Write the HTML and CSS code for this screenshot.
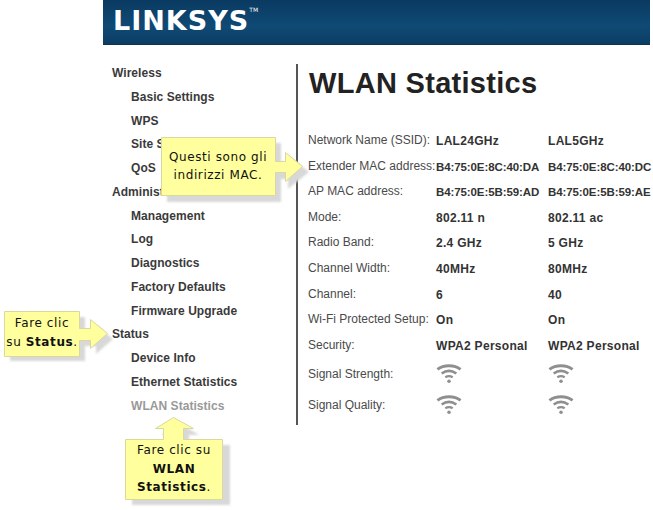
FILE: index.html
```html
<!DOCTYPE html>
<html lang="en">
<head>
    <meta charset="UTF-8">
    <title>WLAN Statistics</title>
    <link rel="stylesheet" href="styles.css">
</head>
<body>
    <svg class="defs" width="0" height="0">
        <symbol id="wifi" viewBox="0 0 24 20">
            <path d="M1 6 C7 1.4 17 1.4 23 6" fill="none" stroke="#8f8f8f" stroke-width="2.8"/>
            <path d="M5 10 C9.5 6.8 14.5 6.8 19 10" fill="none" stroke="#8f8f8f" stroke-width="2.5"/>
            <path d="M8.5 13.6 C10.8 12.2 13.2 12.2 15.5 13.6" fill="none" stroke="#8f8f8f" stroke-width="2.2"/>
            <circle cx="12" cy="17.4" r="1.7" fill="#8f8f8f"/>
        </symbol>
    </svg>
    <div class="page">
        <header class="topbar">
            <span class="logo">LINKSYS<sup>TM</sup></span>
        </header>
        <div class="main">
            <nav class="sidebar">
                <a class="group">Wireless</a>
                <a>Basic Settings</a>
                <a>WPS</a>
                <a>Site Survey</a>
                <a>QoS</a>
                <a class="group">Administration</a>
                <a>Management</a>
                <a>Log</a>
                <a>Diagnostics</a>
                <a>Factory Defaults</a>
                <a>Firmware Upgrade</a>
                <a class="group">Status</a>
                <a>Device Info</a>
                <a>Ethernet Statistics</a>
                <a class="current">WLAN Statistics</a>
            </nav>
            <section class="content">
                <h1>WLAN Statistics</h1>
                <div class="stats">
                    <span>Network Name (SSID):</span><b>LAL24GHz</b><b>LAL5GHz</b>
                    <span>Extender MAC address:</span><b class="mac">B4:75:0E:8C:40:DA</b><b class="mac">B4:75:0E:8C:40:DC</b>
                    <span>AP MAC address:</span><b class="mac">B4:75:0E:5B:59:AD</b><b class="mac">B4:75:0E:5B:59:AE</b>
                    <span>Mode:</span><b>802.11 n</b><b>802.11 ac</b>
                    <span>Radio Band:</span><b>2.4 GHz</b><b>5 GHz</b>
                    <span>Channel Width:</span><b>40MHz</b><b>80MHz</b>
                    <span>Channel:</span><b>6</b><b>40</b>
                    <span>Wi-Fi Protected Setup:</span><b>On</b><b>On</b>
                    <span>Security:</span><b>WPA2 Personal</b><b>WPA2 Personal</b>
                </div>
                <div class="signals">
                    <span>Signal Strength:</span>
                    <svg class="wifi"><use href="#wifi"/></svg>
                    <svg class="wifi"><use href="#wifi"/></svg>
                    <span>Signal Quality:</span>
                    <svg class="wifi"><use href="#wifi"/></svg>
                    <svg class="wifi"><use href="#wifi"/></svg>
                </div>
            </section>
        </div>
    </div>

    <div class="callout callout-mac">
        <svg width="152" height="72" viewBox="0 0 152 72">
            <path class="shadow" d="M6 6H120V26H127V18L148 35L127 52V42H120V65H6Z"/>
            <path class="shape" d="M0.5 0.5H114.5V24.5H124.5V15.5L141.5 29.5L124.5 44.5V35.5H114.5V58.5H0.5Z"/>
        </svg>
        <p>Questi sono gli<br>indirizzi MAC.</p>
    </div>
    <div class="callout callout-status">
        <svg width="116" height="62" viewBox="0 0 116 62">
            <path class="shadow" d="M6 6H81V22H92V14L109 28L92 43V35H81V50H6Z"/>
            <path class="shape" d="M0.5 0.5H75.5V17.5H86.5V8.5L103.5 22.5L86.5 37.5V29.5H75.5V45.5H0.5Z"/>
        </svg>
        <p>Fare clic<br>su <b>Status</b>.</p>
    </div>
    <div class="callout callout-wlan">
        <svg width="112" height="92" viewBox="0 0 112 92">
            <path class="shadow" d="M7 28H44V18H36L54 6L74 18H64V28H105V88H7Z"/>
            <path class="shape" d="M0.5 22.5H38.5V11.5H30.5L48.5 0.5L68.5 11.5H58.5V22.5H97.5V82.5H0.5Z"/>
        </svg>
        <p>Fare clic su<br><b>WLAN</b><br><b>Statistics</b>.</p>
    </div>
</body>
</html>
```

FILE: styles.css
```css
body {
    margin: 0;
    font-family: "Liberation Sans", Arial, sans-serif;
    background-color: #fff;
    color: #333;
}
.defs {
    position: absolute;
}
.page {
    width: 547px;
    margin-left: 103px;
}
.topbar {
    height: 45px;
    box-sizing: border-box;
    padding: 5px 0 0 10px;
    background: linear-gradient(#0a3a61, #0f4a75 60%, #0b3d63);
    border-bottom: 1px solid #12334d;
}
.logo {
    font-family: "DejaVu Sans", sans-serif;
    font-size: 27px;
    font-weight: bold;
    line-height: 32px;
    letter-spacing: 1px;
    color: #fff;
}
.logo sup {
    font-size: 6px;
    font-weight: normal;
    letter-spacing: 0;
    vertical-align: 18px;
    line-height: 0;
}
.main {
    display: flex;
    padding-top: 19px;
}
.sidebar {
    width: 184px;
    height: 361px;
    flex-shrink: 0;
    padding: 0 0 0 9px;
    border-right: 2px solid #555;
    font-size: 12px;
    font-weight: bold;
    letter-spacing: 0.05px;
}
.sidebar a {
    display: block;
    height: 23.75px;
    line-height: 18px;
    padding-left: 19px;
    color: #3a3a3a;
    white-space: nowrap;
}
.sidebar a.group {
    padding-left: 0;
}
.sidebar a.current {
    color: #999;
}
.content {
    padding-left: 11px;
}
h1 {
    margin: 0;
    height: 68px;
    padding-top: 1px;
    font-size: 29px;
    line-height: 36px;
    letter-spacing: 0.3px;
    color: #222;
    white-space: nowrap;
}
.stats,
.signals {
    display: grid;
    grid-template-columns: 128px 112px 104px;
    margin-left: -1px;
    font-size: 12px;
    white-space: nowrap;
}
.stats {
    grid-auto-rows: 25.6px;
    line-height: 14px;
}
.stats span,
.signals span {
    color: #4a4a4a;
}
.stats b {
    color: #333;
    letter-spacing: 0.3px;
    padding-top: 1px;
}
.stats b.mac {
    font-size: 11.5px;
    letter-spacing: -0.1px;
}
.signals {
    grid-auto-rows: 31px;
    align-items: center;
    margin-top: -5px;
}
.wifi {
    width: 26px;
    height: 21px;
}
.callout {
    position: absolute;
}
.callout svg {
    display: block;
}
.shape {
    fill: #ffff9d;
    stroke: #d8d8a0;
}
.shadow {
    fill: #d8d8d8;
    filter: blur(1px);
}
.callout p {
    position: absolute;
    margin: 0;
    font-family: "DejaVu Sans", Verdana, sans-serif;
    font-size: 12px;
    line-height: 18px;
    letter-spacing: 0.6px;
    text-align: center;
    color: #111;
    white-space: nowrap;
}
.callout-mac {
    left: 161px;
    top: 137px;
}
.callout-mac p {
    left: 0;
    top: 11px;
    width: 114px;
}
.callout-status {
    left: 4px;
    top: 311px;
}
.callout-status p {
    left: 0;
    top: 3px;
    width: 76px;
    line-height: 19px;
}
.callout-wlan {
    left: 125px;
    top: 417px;
}
.callout-wlan p {
    left: 0;
    top: 24px;
    width: 98px;
    line-height: 18.5px;
}
```
